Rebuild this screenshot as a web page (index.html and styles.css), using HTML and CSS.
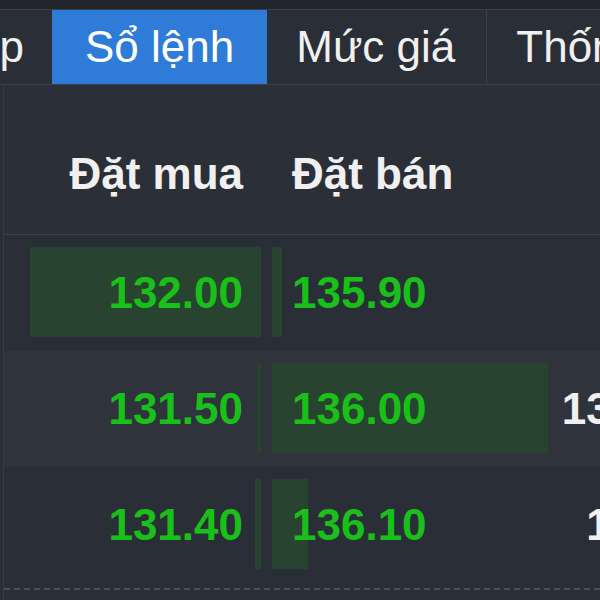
FILE: index.html
```html
<!DOCTYPE html>
<html lang="vi">
<head>
<meta charset="UTF-8">
<title>Sổ lệnh</title>
<link rel="stylesheet" href="styles.css">
</head>
<body>

<div class="topbar"></div>

<div class="tabs">
    <div class="tab tab-cut">Tổng hợp</div>
    <div class="tab active">Sổ lệnh</div>
    <div class="tab">Mức giá</div>
    <div class="tab">Thống kê</div>
</div>

<div class="book">

    <div class="row head">
        <div class="cell bid">Đặt mua</div>
        <div class="cell ask">Đặt bán</div>
        <div class="cell vol"></div>
    </div>

    <div class="row">
        <div class="cell bid"><span class="bar" style="width:231px"></span><span class="px">132.00</span></div>
        <div class="cell ask"><span class="bar" style="width:10px"></span><span class="px">135.90</span></div>
        <div class="cell vol"></div>
    </div>

    <div class="row alt">
        <div class="cell bid"><span class="bar" style="width:4px"></span><span class="px">131.50</span></div>
        <div class="cell ask"><span class="bar" style="width:276px"></span><span class="px">136.00</span></div>
        <div class="cell vol">13,520,000</div>
    </div>

    <div class="row">
        <div class="cell bid"><span class="bar" style="width:6px"></span><span class="px">131.40</span></div>
        <div class="cell ask"><span class="bar" style="width:36px"></span><span class="px">136.10</span></div>
        <div class="cell vol">1,250,000</div>
    </div>

    <div class="foot"></div>

</div>

</body>
</html>
```

FILE: styles.css
```css
* {
    box-sizing: border-box;
}

html, body {
    margin: 0;
    overflow: hidden;
}

body {
    width: 600px;
    height: 600px;
    background: #2a2e36;
    color: #f0f0f0;
    font-family: "Liberation Sans", Arial, sans-serif;
}

.topbar {
    height: 10px;
    background: #22252b;
    border-bottom: 1px solid #3b3f47;
}

.tabs {
    display: flex;
    height: 75px;
    background: #2a2e36;
    border-bottom: 1px solid #3b3f47;
    font-size: 44px;
    white-space: nowrap;
}

.tab {
    flex: none;
    padding: 0 31px 0 29px;
    line-height: 74px;
    border-right: 1px solid #3b3f47;
}

.tab-cut {
    width: 52px;
    display: flex;
    justify-content: flex-end;
    overflow: hidden;
    padding: 0 28px 0 0;
    border-right: 0;
}

.tab.active {
    background: #2e7bd8;
    color: #fff;
    padding: 0 33px;
    border-right: 0;
}

.book {
    margin-left: 3px;
    width: 797px;
    border-left: 1px solid #383c44;
}

.row {
    display: grid;
    grid-template-columns: 262px 287px 1fr;
    height: 116px;
    font-size: 44px;
    font-weight: bold;
    line-height: 50px;
    background: #2a2e36;
}

.row.alt {
    background: #2f333c;
}

.row.head {
    height: 150px;
    align-items: end;
    padding-bottom: 35px;
    background: #2b2f37;
    border-bottom: 1px solid #3b3f47;
}

.cell {
    position: relative;
    display: flex;
    align-items: center;
}

.bid {
    justify-content: flex-end;
    padding-right: 23px;
}

.ask {
    padding-left: 26px;
}

.vol {
    justify-content: flex-end;
    padding-right: 18px;
}

.bar {
    position: absolute;
    top: 12px;
    bottom: 14px;
    background: #28432f;
}

.bid .bar {
    right: 5px;
}

.ask .bar {
    left: 6px;
}

.px {
    position: relative;
    color: #1ac01a;
}

.foot {
    margin-top: 5px;
    height: 20px;
    border-top: 2px dashed #4b4f57;
}
```
